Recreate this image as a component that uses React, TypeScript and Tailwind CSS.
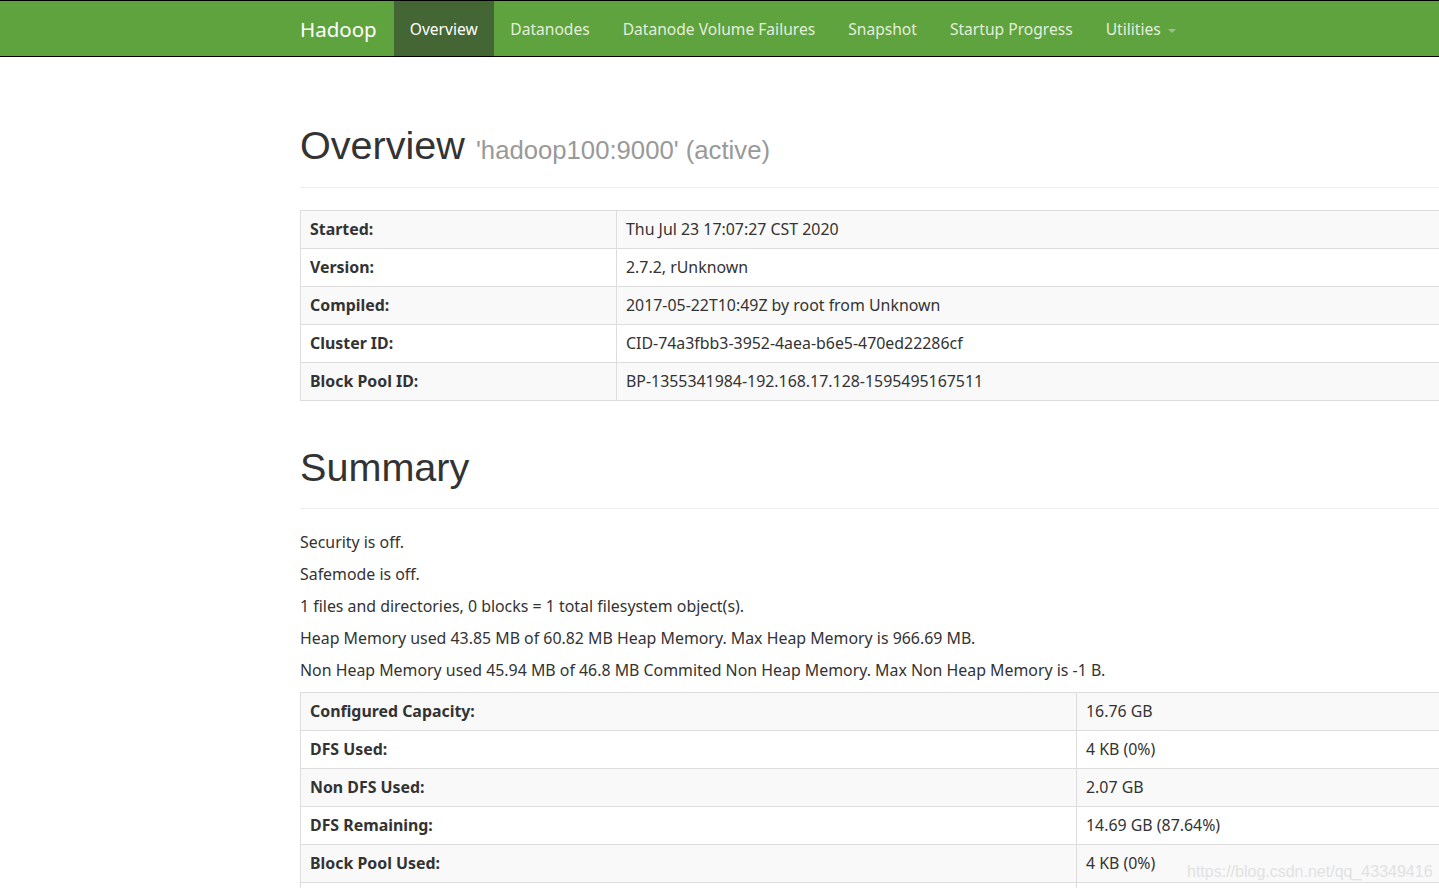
import React from "react";

const body = { fontFamily: '"Noto Sans", "Open Sans", sans-serif' };

function InfoTable({ rows, labelWidth }: { rows: [string, string][]; labelWidth: number }) {
  return (
    <table className="border-collapse border border-[#ddd] w-[1141px] text-[15.9px] text-[#333]">
      <tbody>
        {rows.map(([k, v], i) => (
          <tr key={k || "row" + i} className={i % 2 === 0 ? "bg-[#f9f9f9]" : "bg-white"}>
            <th
              className="h-[38px] border border-[#ddd] px-[9px] pt-[1px] text-left font-bold align-middle"
              style={{ width: labelWidth }}
            >
              {k}
            </th>
            <td className="h-[38px] border border-[#ddd] px-[9px] pt-[1px] align-middle">{v}</td>
          </tr>
        ))}
      </tbody>
    </table>
  );
}

export default function App() {
  const navItems = [
    "Datanodes",
    "Datanode Volume Failures",
    "Snapshot",
    "Startup Progress",
  ];
  return (
    <div className="relative w-[1439px] h-[888px] overflow-hidden bg-white" style={body}>
      <nav className="h-[57px] bg-[#5fa33e] border-y border-black flex items-stretch pl-[300px]">
        <div className="flex items-center pr-[17px] pt-[2px] text-white text-[20.5px]">Hadoop</div>
        <div className="flex items-center px-[16px] pt-[2px] bg-[#446634] text-white text-[15.6px]">Overview</div>
        {navItems.map((n) => (
          <div key={n} className="flex items-center px-[16.5px] pt-[2px] text-[#e4eedb] text-[15.6px]">
            {n}
          </div>
        ))}
        <div className="flex items-center px-[16.5px] pt-[2px] text-[#e4eedb] text-[15.6px] gap-[7px]">
          Utilities
          <span className="inline-block w-0 h-0 border-x-[4px] border-x-transparent border-t-[4px] border-t-[#a8b8a0] mt-[2px]" />
        </div>
      </nav>

      <main className="pl-[300px]">
        <div className="pt-[67px] pb-[19px] border-b border-[#eee] w-[1140px]">
          <h1
            className="text-[39.6px] leading-[1.1] text-[#333]"
            style={{ fontFamily: '"Liberation Sans", Arial, sans-serif' }}
          >
            Overview{" "}
            <span className="text-[25.7px] text-[#999]">'hadoop100:9000' (active)</span>
          </h1>
        </div>

        <div className="mt-[22px]">
          <InfoTable
            labelWidth={316}
            rows={[
              ["Started:", "Thu Jul 23 17:07:27 CST 2020"],
              ["Version:", "2.7.2, rUnknown"],
              ["Compiled:", "2017-05-22T10:49Z by root from Unknown"],
              ["Cluster ID:", "CID-74a3fbb3-3952-4aea-b6e5-470ed22286cf"],
              ["Block Pool ID:", "BP-1355341984-192.168.17.128-1595495167511"],
            ]}
          />
        </div>

        <div className="pt-[45px] pb-[19px] border-b border-[#eee] w-[1140px]">
          <h1
            className="text-[39.6px] leading-[1.1] text-[#333]"
            style={{ fontFamily: '"Liberation Sans", Arial, sans-serif' }}
          >
            Summary
          </h1>
        </div>

        <div className="pt-[22px] text-[15.9px] leading-[22px] text-[#333]">
          <p className="mb-[10px]">Security is off.</p>
          <p className="mb-[10px]">Safemode is off.</p>
          <p className="mb-[10px]">1 files and directories, 0 blocks = 1 total filesystem object(s).</p>
          <p className="mb-[10px]">Heap Memory used 43.85 MB of 60.82 MB Heap Memory. Max Heap Memory is 966.69 MB.</p>
          <p className="mb-[11px]">Non Heap Memory used 45.94 MB of 46.8 MB Commited Non Heap Memory. Max Non Heap Memory is -1 B.</p>
        </div>

        <InfoTable
          labelWidth={776}
          rows={[
            ["Configured Capacity:", "16.76 GB"],
            ["DFS Used:", "4 KB (0%)"],
            ["Non DFS Used:", "2.07 GB"],
            ["DFS Remaining:", "14.69 GB (87.64%)"],
            ["Block Pool Used:", "4 KB (0%)"],
            ["", ""],
          ]}
        />
      </main>

      <div
        className="absolute left-[1187px] top-[860px] text-[16px] text-[#e2e2e2]"
        style={{ fontFamily: '"Liberation Sans", Arial, sans-serif' }}
      >
        https://blog.csdn.net/qq_43349416
      </div>
    </div>
  );
}
